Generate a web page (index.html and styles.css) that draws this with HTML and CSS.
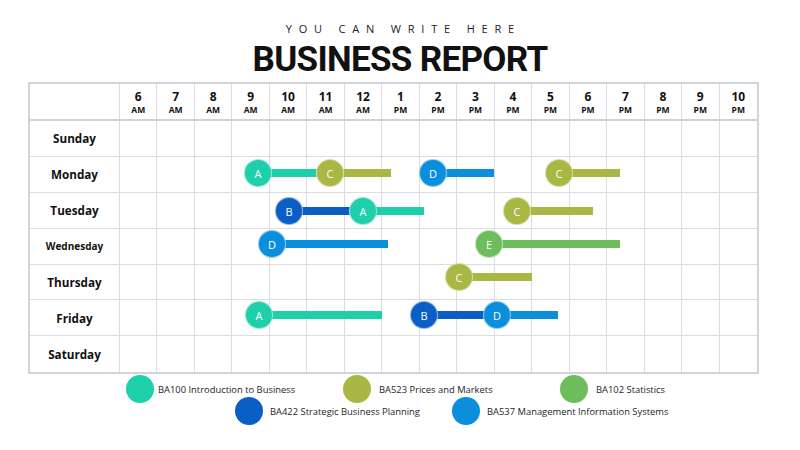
FILE: index.html
```html
<!DOCTYPE html>
<html>
<head>
<meta charset="utf-8">
<link rel="stylesheet" href="styles.css">
</head>
<body>
<div class="page">
  <div class="subtitle">YOU CAN WRITE HERE</div>
  <h1 class="title">BUSINESS REPORT</h1>

  <div class="chart">
    <div class="grid">
      <div class="cell head corner"></div>
      <div class="cell head"><b>6</b><i>AM</i></div>
      <div class="cell head"><b>7</b><i>AM</i></div>
      <div class="cell head"><b>8</b><i>AM</i></div>
      <div class="cell head"><b>9</b><i>AM</i></div>
      <div class="cell head"><b>10</b><i>AM</i></div>
      <div class="cell head"><b>11</b><i>AM</i></div>
      <div class="cell head"><b>12</b><i>AM</i></div>
      <div class="cell head"><b>1</b><i>PM</i></div>
      <div class="cell head"><b>2</b><i>PM</i></div>
      <div class="cell head"><b>3</b><i>PM</i></div>
      <div class="cell head"><b>4</b><i>PM</i></div>
      <div class="cell head"><b>5</b><i>PM</i></div>
      <div class="cell head"><b>6</b><i>PM</i></div>
      <div class="cell head"><b>7</b><i>PM</i></div>
      <div class="cell head"><b>8</b><i>PM</i></div>
      <div class="cell head"><b>9</b><i>PM</i></div>
      <div class="cell head"><b>10</b><i>PM</i></div>
    </div>
    <div class="rows" id="rows"></div>

    <div class="bars">
      <div class="seg teal"  style="left:216px;top:77px;width:86px"><span class="dot">A</span></div>
      <div class="seg olive" style="left:288px;top:77px;width:75px"><span class="dot">C</span></div>
      <div class="seg blue"  style="left:391px;top:77px;width:75px"><span class="dot">D</span></div>
      <div class="seg olive" style="left:517px;top:77px;width:75px"><span class="dot">C</span></div>

      <div class="seg navy"  style="left:247px;top:115px;width:88px"><span class="dot">B</span></div>
      <div class="seg teal"  style="left:321px;top:115px;width:75px"><span class="dot">A</span></div>
      <div class="seg olive" style="left:475px;top:115px;width:90px"><span class="dot">C</span></div>

      <div class="seg blue"  style="left:230px;top:148px;width:130px"><span class="dot">D</span></div>
      <div class="seg green" style="left:447px;top:148px;width:145px"><span class="dot">E</span></div>

      <div class="seg olive" style="left:417px;top:181px;width:87px"><span class="dot">C</span></div>

      <div class="seg teal"  style="left:217px;top:219px;width:137px"><span class="dot">A</span></div>
      <div class="seg navy"  style="left:382px;top:219px;width:87px"><span class="dot">B</span></div>
      <div class="seg blue"  style="left:455px;top:219px;width:75px"><span class="dot">D</span></div>
    </div>
  </div>

  <div class="legend">
    <div class="legend-row first">
      <div class="item"><span class="swatch teal"></span>BA100 Introduction to Business</div>
      <div class="item"><span class="swatch olive"></span>BA523 Prices and Markets</div>
      <div class="item"><span class="swatch green"></span>BA102 Statistics</div>
    </div>
    <div class="legend-row second">
      <div class="item"><span class="swatch navy"></span>BA422 Strategic Business Planning</div>
      <div class="item"><span class="swatch blue"></span>BA537 Management Information Systems</div>
    </div>
  </div>
</div>
<script>
  var days = ["Sunday","Monday","Tuesday","Wednesday","Thursday","Friday","Saturday"];
  var html = "";
  days.forEach(function (d) {
    html += '<div class="row"><div class="cell day' + (d === "Wednesday" ? " small" : "") + '">' + d + '</div>';
    for (var i = 0; i < 17; i++) html += '<div class="cell"></div>';
    html += '</div>';
  });
  document.getElementById("rows").innerHTML = html;
</script>
</body>
</html>
```

FILE: styles.css
```css
* { box-sizing: border-box; }
html, body { margin: 0; padding: 0; background: #ffffff; }
body { font-family: "Open Sans", "DejaVu Sans", sans-serif; color: #1a1a1a; }

.page { width: 800px; height: 450px; padding-top: 23px; overflow: hidden; }

.subtitle {
  text-align: center;
  font-size: 11px;
  line-height: 11px;
  letter-spacing: 6.8px;
  padding-left: 6.8px;
  color: #222;
}

.title {
  margin: 8px 0 0 0;
  text-align: center;
  font-family: Roboto, "Liberation Sans", sans-serif;
  font-weight: 700;
  font-size: 35px;
  line-height: 35px;
  color: #111;
  letter-spacing: -0.7px;
}

.chart {
  position: relative;
  margin: 5px 0 0 28px;
  width: 731px;
  border: 2px solid #d3d3da;
}

.grid, .row {
  display: grid;
  grid-template-columns: 90px repeat(17, 1fr);
}
.grid { height: 37px; border-bottom: 2px solid #d0d0d7; }
.row { height: 35.9px; border-bottom: 1px solid #dcdce2; }
.row:last-child { border-bottom: none; }

.cell { border-right: 1px solid #dcdce2; }
.cell:last-child { border-right: none; }

.head {
  display: flex;
  flex-direction: column;
  align-items: center;
  padding-top: 6px;
  font-weight: 700;
  color: #111;
}
.head b { font-size: 12px; line-height: 14px; font-weight: 700; }
.head i { font-style: normal; font-size: 8.5px; line-height: 11px; font-weight: 700; }

.day {
  display: flex;
  align-items: center;
  justify-content: center;
  font-weight: 700;
  font-size: 11.7px;
  color: #111;
}
.day.small { font-size: 10px; }

.bars { position: absolute; left: -2px; top: -2px; right: 0; bottom: 0; }

.seg { position: absolute; height: 28px; }
.seg::before {
  content: "";
  position: absolute;
  left: 14px;
  right: 0;
  top: 10px;
  height: 8px;
  background: var(--c);
}
.dot {
  position: absolute;
  left: 0;
  top: 0;
  width: 28px;
  height: 28px;
  border-radius: 50%;
  background: var(--c);
  border: 1px solid rgba(255,255,255,0.55);
  color: #fff;
  font-size: 11px;
  display: flex;
  align-items: center;
  justify-content: center;
}

.teal  { --c: #1ecfab; }
.olive { --c: #a9b844; }
.green { --c: #6dbd5d; }
.navy  { --c: #0b5ec3; }
.blue  { --c: #0b8fdc; }

.legend { margin-top: 4px; }
.legend-row { display: flex; height: 22px; align-items: center; }
.legend-row.first { padding-left: 126px; }
.legend-row.second { padding-left: 235px; }
.item {
  width: 217px;
  display: flex;
  align-items: center;
  gap: 4px;
  font-size: 9.4px;
  color: #1e1e1e;
  white-space: nowrap;
}
.legend-row.second .item { gap: 7px; }
.legend-row.first .item + .item { gap: 8px; }
.swatch {
  width: 28px;
  height: 28px;
  border-radius: 50%;
  background: var(--c);
  flex: none;
}
```
